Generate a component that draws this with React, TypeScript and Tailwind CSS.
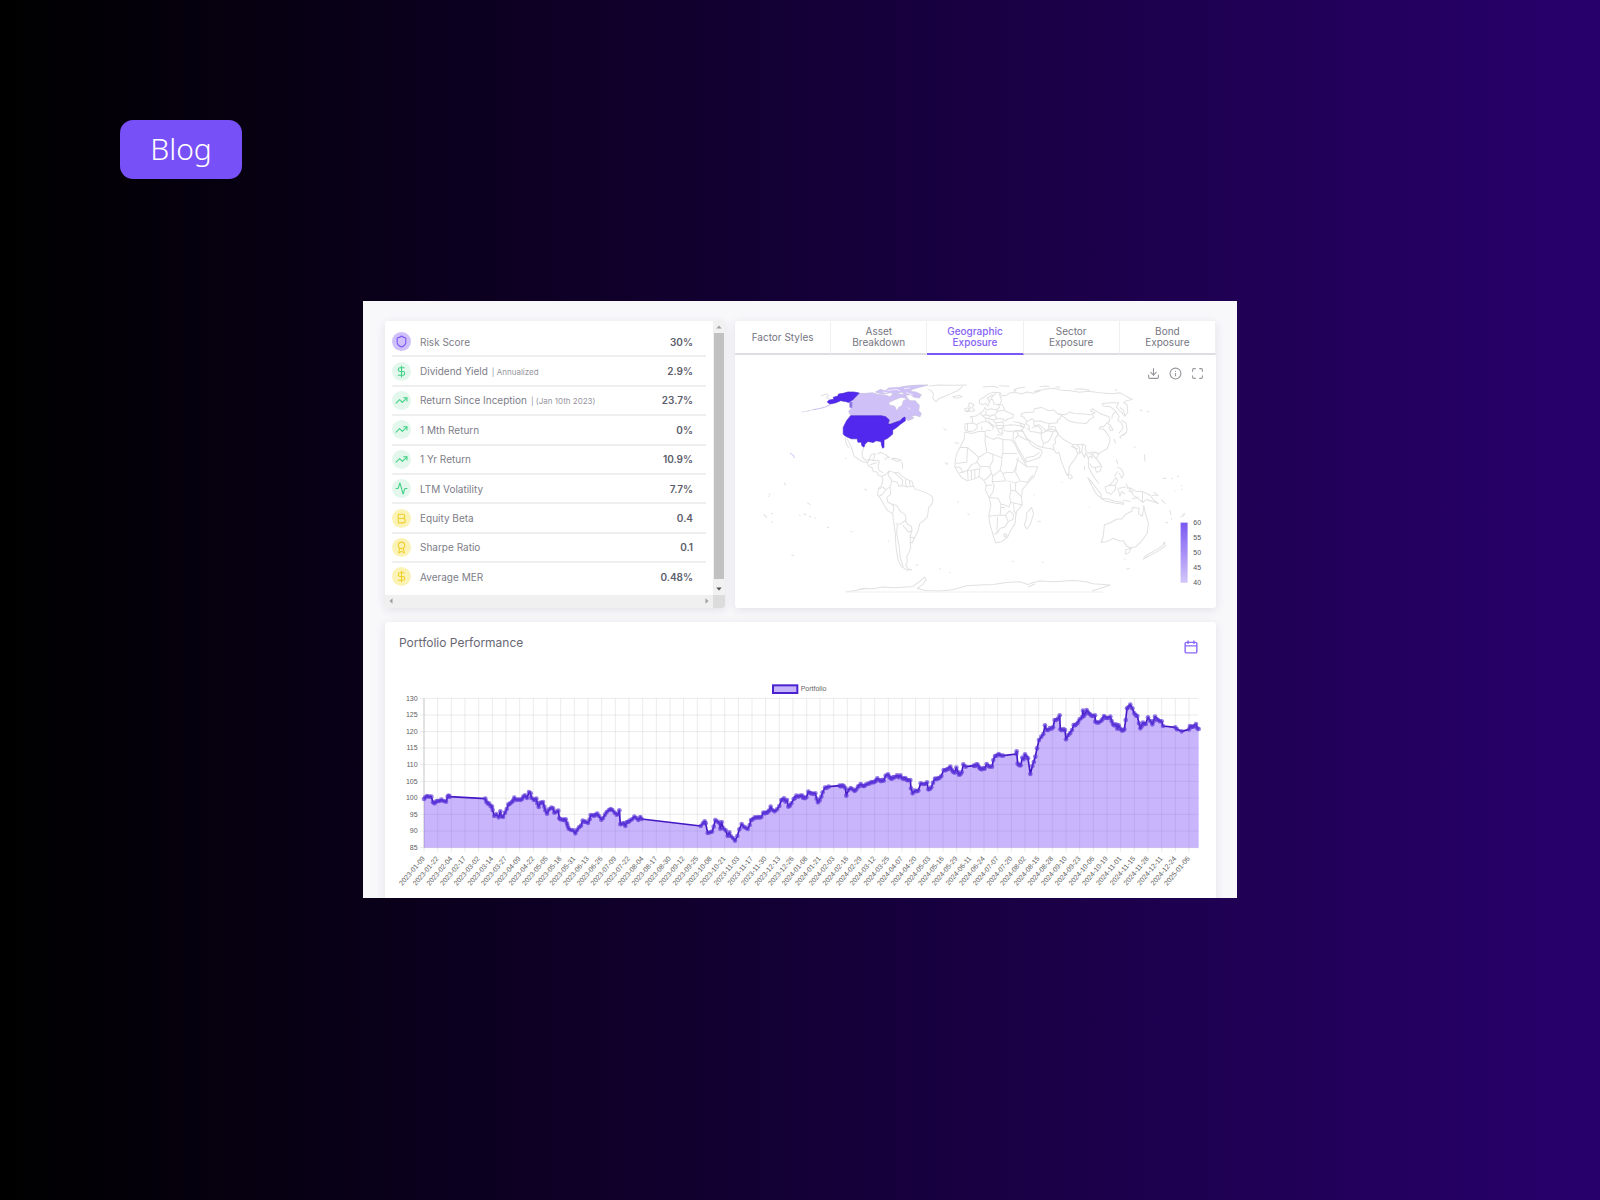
import React from "react";
import {
  Activity,
  Award,
  Bold,
  DollarSign,
  Download,
  Info,
  Maximize,
  Shield,
  TrendingUp,
  type LucideIcon,
} from "lucide-react";

type Metric = {
  label: string;
  note?: string;
  value: string;
  icon: LucideIcon;
  tone: string;
};

const VIOLET = "bg-[#cfc0fa] text-[#7b55f6]";
const GREEN = "bg-[#e4f7ec] text-[#3fd084]";
const YELLOW = "bg-[#fbf3b6] text-[#f0cf2c]";

const METRICS: Metric[] = [
  { label: "Risk Score", value: "30%", icon: Shield, tone: VIOLET },
  { label: "Dividend Yield", note: "| Annualized", value: "2.9%", icon: DollarSign, tone: GREEN },
  { label: "Return Since Inception", note: "| (Jan 10th 2023)", value: "23.7%", icon: TrendingUp, tone: GREEN },
  { label: "1 Mth Return", value: "0%", icon: TrendingUp, tone: GREEN },
  { label: "1 Yr Return", value: "10.9%", icon: TrendingUp, tone: GREEN },
  { label: "LTM Volatility", value: "7.7%", icon: Activity, tone: GREEN },
  { label: "Equity Beta", value: "0.4", icon: Bold, tone: YELLOW },
  { label: "Sharpe Ratio", value: "0.1", icon: Award, tone: YELLOW },
  { label: "Average MER", value: "0.48%", icon: DollarSign, tone: YELLOW },
];

const TABS = ["Factor Styles", "Asset Breakdown", "Geographic Exposure", "Sector Exposure", "Bond Exposure"];

const CARD = "bg-white rounded-[3px] shadow-[0_2px_10px_rgba(40,40,60,0.10)]";

function Arrow({ d, dark = false }: { d: string; dark?: boolean }) {
  return (
    <svg viewBox="0 0 12 12" className={dark ? "size-3 fill-[#505050]" : "size-3 fill-[#a0a0a0]"} aria-hidden="true">
      <path d={d} />
    </svg>
  );
}

function MetricsCard() {
  return (
    <section className={`${CARD} grid grid-cols-[1fr_12px] grid-rows-[1fr_13px] overflow-hidden`}>
      <dl className="flex flex-col pt-[7px] pb-[3px] pl-[7px] pr-[7px]">
        {METRICS.map(({ label, note, value, icon: Icon, tone }, i) => (
          <div
            key={label}
            className={`flex flex-1 items-center border-b-2 pr-[13px] ${
              i < METRICS.length - 1 ? "border-[#efefef]" : "border-transparent"
            }`}
          >
            <span className={`flex size-[19px] items-center justify-center rounded-full ${tone}`}>
              <Icon size={13} strokeWidth={2} />
            </span>
            <dt className="ml-[9px] flex items-baseline gap-1 text-[10px] leading-none text-[#7d7d88]">
              {label}
              {note && <span className="text-[8px] text-[#96969f]">{note}</span>}
            </dt>
            <dd className="ml-auto text-[10px] leading-none font-semibold text-[#5d5d6b]">{value}</dd>
          </div>
        ))}
      </dl>
      <div className="flex flex-col bg-[#f1f1f1]" aria-hidden="true">
        <Arrow d="M6 4.5 8.7 7.5H3.3z" />
        <div className="mx-px flex-1 bg-[#c1c1c1]" />
        <div className="pt-[4px]">
          <Arrow dark d="M6 7.5 8.7 4.5H3.3z" />
        </div>
      </div>
      <div className="flex justify-between bg-[#f0f0f0]" aria-hidden="true">
        <Arrow d="M4.5 6 7.5 3.3V8.7z" />
        <Arrow d="M7.5 6 4.5 3.3V8.7z" />
      </div>
      <div className="bg-[#dcdcdc]" />
    </section>
  );
}

const AMERICAS = [
  "M318,202 L319,214 L324,226 L329,233 M323,205 L329,216 L336,232 L341,244 L344,258 L356,266 L368,274 L378,276 L384,278 L388,288 L398,292 L402,304 L412,305 L418,316 L428,318 L440,312 L450,302 L462,306 L478,308 L488,318 L500,326 L518,334 L522,346 L526,356 L545,362 L560,368 L576,377 L581,386 L578,400 L568,412 L564,440 L552,452 L541,460 L536,482 L526,500 L518,518 L512,515 L514,532 L508,548 L502,558 L504,575 L499,585 L506,596 L518,598 L502,599 L486,588 L476,570 L470,530 L468,490 L462,450 L460,430 L446,422 L434,404 L424,385 L415,374 L417,356 L427,345 L431,330 L428,318",
  "M374,232 L368,246 L370,262 L382,272 L390,266 L397,252 L408,251 L404,264 L400,270 L420,272 L416,290 L420,302 L432,308 M384,278 L392,268 L402,272 M392,284 L412,278",
  "M414,251 L424,247 L436,252 L450,262 L440,262 M456,266 L466,264 L486,270 L474,274z M434,266 l8,2 M488,274 L490,296",
  "M450,302 L446,314 L458,332 L474,336 L478,348 L490,346 L502,350 L524,348 M466,308 L482,322 L490,330 L488,346 M500,326 L498,340 L502,350 M510,330 L512,346 M417,358 L430,350 L440,358 L430,372 L420,378 M440,358 L452,350 L458,332 M452,350 L454,372 L442,382 L446,396 L458,402 L464,412 L460,430 M458,402 L472,406 L484,424 L498,434 L500,450 L490,456 L482,462 L468,460 M498,450 L504,462 L516,468 L518,480 L508,486 L490,464 M518,480 L512,498 L514,516 M512,500 L528,504 M474,462 L472,490 L480,530 L482,560 L492,590",
  "M568,48 L600,45 L640,46 L682,45 M566,58 L576,62 L582,72 L580,86 L590,95 L598,86 L612,80 L636,70 L654,62 L664,54 L670,47",
  "M527,585 l10,-2 M600,595 l5,1 M630,606 l4,1 M375,356 l8,4 M204,397 l10,7 M193,430 l8,4 M210,437 l6,3 M226,442 l5,2 M180,434 l4,3 M74,432 l10,10 M90,370 l4,3 M86,378 l5,0 M135,338 l6,8 M96,454 l5,2 M157,553 l7,3 M96,430 l5,0 M264,470 l6,3 M334,484 l6,0 M445,512 l4,1 M318,264 l4,2 M612,175 l10,6 M616,278 l10,2 M622,284 l3,-4 M645,218 l14,1 M684,430 l6,4 M654,394 l4,2",
  "M245,78 l16,-6 8,5 -8,6 10,4 M205,124 l4,-1",
];

const OLD_WORLD = [
  // Europe
  "M40,80 l20,-4 8,4 -18,5z M130,51 L162,49 L176,53 M178,47 L210,49 M128,104 L119,98 L121,88 L136,80 L148,71 L162,67 L182,68 L180,74 L186,92 L180,104 L164,102 L160,90 L154,86 L150,96 L144,108 L138,100 L128,104 M154,86 L162,76 L170,70 M150,96 L144,84 L160,74",
  "M90,98 L104,104 L98,112 L106,122 L80,125 L94,114 L86,106z M76,116 l10,-3 3,9 -12,1z M77,161 L96,159 L112,163 L114,172 L104,182 L90,184 L78,181 L76,172z M84,162 L84,182 M98,159 L100,146 L92,140 L110,138 L122,130 L132,122 L136,112 L142,120 L154,116 L170,120 L180,112 L176,102 M122,130 L130,138 L140,134 L138,122 M112,163 L126,156 L140,154 L138,144 L130,138",
  "M140,134 L152,138 L166,134 L174,124 L170,116 M152,138 L148,146 L138,144 M166,134 L172,146 L160,150 L148,146 M174,124 L192,120 L204,126 L222,134 L220,142 L206,146 L198,152 L188,146 L172,146 M172,104 L188,104 L196,118 M140,154 L150,160 L162,172 L158,178 M146,152 L156,162 L168,170 M160,150 L168,158 L172,172 L180,188 L190,190 L186,176 L192,168 L190,152 M168,158 L190,156 M170,166 L190,166 M176,176 L190,174 M126,170 l2,10 M140,180 l14,2 M172,194 l18,1",
  "M192,168 L212,164 L238,166 L252,172 L248,180 L228,182 L212,184 L194,182z M222,154 L240,158 L256,164 L252,172 M240,158 L246,168 L258,172",
  // Russia and the Arctic coast
  "M182,68 L186,78 L200,76 L212,68 L232,68 L246,72 L262,66 L282,70 L302,62 L284,64 L320,57 L344,55 L362,60 L392,62 L420,67 L446,64 L480,68 L518,71 L540,68 L556,76 L568,84 L578,88 L560,92 L552,98 L562,104 L564,126 L556,138 L540,122 L530,112 L536,98 L512,98 L488,100 L490,108 L512,110 L528,124 L518,134 L516,146 M222,60 l14,-6 20,-3 M230,60 l-8,6 M300,50 l18,-2 12,3 M404,58 l20,-2 26,5 M524,60 l8,0 M348,50 l14,2",
  // Central Asia
  "M245,132 L254,128 L282,126 L284,116 L306,112 L326,122 L342,120 L356,132 L366,136 L360,146 L352,152 L354,158 L330,160 L316,158 L300,152 L290,154 L282,150 L278,146 L262,154 L254,142 L244,138z M262,154 L258,160 L268,168 L270,180 L262,176 M282,150 L284,166 L300,164 L314,178 L322,182 L334,176 L350,182 L346,170 L326,170 L330,160 M278,172 L296,168 L306,180 L304,190",
  "M270,184 L288,186 L304,190 L306,206 L312,220 L308,232 L290,226 L278,216 L262,206 L250,184 L244,178 M304,190 L322,182 L340,184 L336,198 L326,214 L314,220 M340,184 L350,182 L356,192 L346,206 L348,218 L340,226 L344,240 L334,236 L308,232 M322,182 L330,172",
  // China and Mongolia
  "M356,132 L376,134 L390,126 L404,130 L434,132 L452,134 L466,128 L452,122 L458,116 L484,132 L508,140 L510,152 L502,158 L490,172 L484,168 L478,176 L492,178 L502,190 L510,204 L510,216 L502,236 L484,246 L476,252 L468,246 L452,246 L446,250 L436,240 L438,228 L430,222 L412,224 L396,222 L372,208 L358,196 L350,182 M366,136 L386,152 L410,158 L440,160 L450,148 L462,142 L458,134 M502,158 L512,166 L520,180 L512,182 L508,168 M522,206 L528,220",
  "M528,124 L538,140 L534,150 L546,160 L550,176 L536,190 M544,150 L558,158 L562,180 L556,192 L548,196 M562,186 L540,200 l4,6 M556,138 L550,120 L540,112",
  // South and south-east Asia
  "M344,240 L350,250 L358,246 L364,270 L374,296 L382,316 L388,308 L388,290 L404,268 L414,252 L410,240 L402,228 M386,312 l8,2 4,8 -6,4 -6,-5z M412,224 L420,234 L418,250 L426,244 L430,222 M400,222 L396,230 L414,236 M426,244 L434,262 L438,248 M438,248 L446,264 L446,290 L454,306 L466,326 L478,340 M446,264 L458,252 L468,264 L476,274 L486,290 L480,304 L470,306 L466,292 L456,290 L450,280 M458,252 L466,246 L476,252 L470,266 L484,284 M466,292 L482,288 M452,250 L460,264",
  "M434,286 l1,14 M444,322 L458,338 L470,354 L484,372 L484,384 L470,372 L458,350z M484,384 L504,386 L526,394 L550,396 L552,402 L524,398 L496,392z M496,350 L508,346 L520,334 L528,322 L534,330 L526,344 L528,356 L514,372 L500,366z M508,346 L526,344 M534,352 L540,378 L546,364 L556,372 M538,354 L558,350 M560,340 l4,16 M530,268 L534,282 M532,290 L544,296 L552,312 L546,324 L538,308 M524,318 l10,-14 M550,390 l22,4 M576,386 l20,-6 M566,362 l14,2",
  "M566,352 L580,358 L590,364 L608,364 L632,376 L640,388 L656,400 L634,392 L620,388 L608,396 L596,386 L582,376z M608,364 V396 M636,376 L652,374 M642,366 L656,378 M664,388 L678,402 M690,420 l3,14 M722,440 l12,-6 M676,456 l8,2 M694,444 l2,4 M728,432 l8,-2 M712,318 l6,2 M724,356 l3,3 M702,362 l4,1 M600,120 l8,2 M620,124 l8,1 M614,252 l1,22 M668,324 l12,0 M582,230 l5,1 M694,324 l5,1 M724,346 l3,1",
  // Middle East
  "M222,186 L232,182 L250,184 L262,206 L274,222 L286,232 L304,238 L308,246 L300,262 L284,268 L258,276 L250,258 L238,240 L226,214 L220,206z M232,182 L236,196 L226,206 M236,196 L262,210 M258,276 L260,262 L284,258 L300,246",
  // Africa
  "M76,186 L96,190 L118,184 L138,184 L136,196 L152,204 L164,208 L172,202 L190,208 L216,210 L226,222 L238,248 L254,276 L262,290 L294,290 L284,318 L262,342 L248,358 L246,380 L248,404 L230,424 L226,460 L214,480 L204,500 L186,514 L168,517 L160,492 L150,456 L148,436 L154,404 L148,380 L138,360 L140,346 L134,332 L120,320 L104,326 L84,332 L66,322 L54,304 L46,290 L48,268 L52,250 L62,232 L74,206z",
  "M60,232 L84,232 L82,276 L48,280 M84,232 L118,262 L112,276 L96,284 L84,300 M118,262 L142,246 L136,210 L138,196 M142,246 L160,252 L160,272 L150,290 L122,288 L112,276 M160,252 L188,264 M190,208 V250 H232 M188,250 L186,282 L182,300 L190,310 L202,306 L220,308 L230,288 L236,262 M150,290 L156,308 L160,318 L182,300 M122,288 L118,320 M156,308 L146,322 L134,330",
  "M160,318 L158,334 L176,334 L198,332 L190,310 M230,288 L228,306 L242,332 L262,336 L280,314 M202,332 L228,338 L242,332 M158,334 L164,346 L160,366 L150,380 M140,346 L158,344 M228,338 L228,362 L246,380 M212,340 L214,360 L228,362 M214,360 L210,380 L214,396 L248,404 M150,382 L176,384 L184,402 L196,404 L208,410 L214,396 M184,402 L182,434 L148,438 M196,412 L184,412 M182,436 L198,434 L210,422 L222,432 L220,448 L206,454 L198,434 M206,454 L196,470 L182,474 L174,488 L164,492 M174,440 L172,486 M196,490 l6,4 -4,6 -6,-4z M222,400 L224,424 L232,432",
  "M48,290 L62,292 L70,306 L84,300 L86,330 M96,300 V328 M106,298 V326 M84,300 L96,300 L120,296 M60,308 L70,306 M230,266 L262,290",
  "M276,412 L282,430 L272,462 L262,476 L254,464 L262,438 L260,430z M294,452 l10,2 M218,572 l4,2 M306,574 l6,2 M448,410 l3,2 M366,336 l2,2 M282,372 l3,3",
  // Oceania
  "M546,446 L556,434 L568,426 L576,424 L578,412 L598,414 L596,430 L608,438 L612,406 L616,428 L626,460 L622,488 L606,512 L586,530 L568,532 L556,522 L552,512 L540,512 L520,504 L500,514 L484,516 L490,500 L494,464 L514,456 L532,446z M562,530 l-12,-20 M558,538 l16,-4 -6,12 -10,6 -2,-6z M674,514 L676,528 L648,546 L610,566 L618,556 L650,538 L668,526z M560,596 l10,-2 M552,566 l5,0",
];

const ANTARCTICA =
  "M320,664 L350,660 L370,654 L402,655 L430,650 L470,652 L520,648 L540,634 L556,620 L560,628 L550,642 L534,654 L560,660 L600,662 L640,658 L680,646 L720,644 L762,642 L800,636 L840,634 L866,642 L880,636 L900,632 L940,634 L1000,630 L1040,634 L1060,640 L1112,644 L1080,654 L1056,662 M340,662 l40,-8 M866,650 l20,-10";

const SCALE_TICKS = [60, 55, 50, 45, 40];

function WorldMap() {
  return (
    <svg viewBox="-12 30 1440 684" className="block h-auto w-full" role="img" aria-label="Geographic exposure by country">
      <defs>
        <linearGradient id="exposure" x1="0" y1="0" x2="0" y2="1">
          <stop offset="0" stopColor="#7a58f2" />
          <stop offset="1" stopColor="#d3c6fa" />
        </linearGradient>
      </defs>
      <g fill="none" stroke="#e1e1e2" strokeWidth="3" strokeLinejoin="round">
        {AMERICAS.map((d) => (
          <path key={d} d={d} />
        ))}
        <g transform="translate(600 0)">
          {OLD_WORLD.map((d) => (
            <path key={d} d={d} />
          ))}
        </g>
        <path d={ANTARCTICA} />
        <path d="M320,665 H1090" stroke="#efeff0" />
      </g>
      <g stroke="#c9c3dc" strokeWidth="2" strokeLinejoin="round">
        <path
          fill="#cfc1f8"
          d="M358,70 L378,70 L400,68 L412,72 L440,76 L452,80 L462,70 L480,72 L498,74 L506,86 L486,82 L464,90 L448,98 L452,106 L466,108 L472,122 L478,112 L488,106 L492,92 L504,86 L514,92 L528,92 L540,106 L538,122 L546,130 L542,140 L528,136 L516,138 L524,144 L506,152 L498,144 L482,150 L470,156 L446,164 L450,150 L440,139 L334,136 L328,124 L338,112 L336,94z"
        />
        <path
          fill="#cfc1f8"
          d="M408,66 L424,58 L438,62 L448,54 L480,52 L500,48 L540,45 L566,45 L540,52 L520,58 L512,64 L530,66 L546,74 L540,84 L524,82 L514,74 L496,76 L488,66 L470,72 L452,68 L434,72 L420,70z"
        />
        <path
          fill="none"
          stroke="#ffffff"
          d="M444,62 L470,58 L482,62 M494,56 L512,54 M500,68 L520,74 M430,66 L444,68 M505,112 l8,6"
        />
        <path
          fill="#5228ef"
          stroke="#4a2ad0"
          d="M360,69 L344,66 L326,66 L312,70 L298,72 L296,78 L282,82 L284,88 L270,90 L264,96 L272,102 L290,98 L304,92 L318,94 L328,97 L340,90z"
        />
        <path fill="#8d75e6" stroke="none" d="M330,96h9v17h-8z" />
        <path
          fill="#5228ef"
          stroke="#4a2ad0"
          d="M334,137 L426,137 L440,140 L450,150 L446,162 L454,162 L470,156 L482,152 L490,144 L497,141 L498,152 L484,162 L472,172 L460,180 L460,192 L446,204 L434,210 L434,232 L430,234 L427,226 L425,214 L410,212 L402,217 L386,214 L377,222 L374,231 L368,227 L366,216 L356,216 L354,206 L336,206 L318,198 L312,192 L312,172 L322,152z"
        />
        <path fill="none" stroke="#a99aea" d="M272,104 L256,112 L238,116 L222,119" />
        <path fill="none" stroke="#cfcfe0" d="M222,119 L204,123 L188,126" />
        <path fill="none" stroke="#8d75e6" d="M153,249 l4,3 M160,254 l4,2 M163,259 l3,4" />
      </g>
      <rect x="1322" y="457" width="21" height="180" fill="url(#exposure)" />
      {SCALE_TICKS.map((tick, i) => (
        <text
          key={tick}
          x="1360"
          y={464 + i * 45}
          className="fill-[#55555c] font-['Liberation_Sans',sans-serif] text-[21px]"
        >
          {tick}
        </text>
      ))}
    </svg>
  );
}

function ExposureCard() {
  return (
    <section className={`${CARD} overflow-hidden`}>
      <div role="tablist" className="grid grid-cols-5">
        {TABS.map((tab) => {
          const active = tab === "Geographic Exposure";
          return (
            <button
              key={tab}
              role="tab"
              aria-selected={active}
              className={`flex h-[34px] items-center justify-center border-b-2 border-r px-4 text-[10px] leading-[11px] ${
                active
                  ? "border-b-[#7b57f5] border-r-[#f0f0f2] font-medium text-[#8562f6]"
                  : "border-b-[#dedee2] border-r-[#f0f0f2] text-[#75757f]"
              } ${tab === "Factor Styles" ? "whitespace-nowrap" : ""}`}
            >
              {tab}
            </button>
          );
        })}
      </div>
      <div className="flex h-[25px] items-start justify-end gap-[9px] pt-[12px] pr-[12px] text-[#95959c]">
        <button aria-label="Download">
          <Download size={13} strokeWidth={2} />
        </button>
        <button aria-label="Information">
          <Info size={13} strokeWidth={2} />
        </button>
        <button aria-label="Full screen">
          <Maximize size={13} strokeWidth={2} />
        </button>
      </div>
      <WorldMap />
    </section>
  );
}

const RUNS: string[] = [
  "163,567 167,562 172,558 178,560 185,560 190,577 195,580 200,574 204,573 210,573 215,569 222,573 229,575 234,560 237,557 240,560",
  "347,566 350,575 367,590 369,600 374,618 380,612 387,622 392,604 395,618 400,621 406,608 411,597 416,584 420,581 426,577 434,563 440,570 446,568 452,570 457,567 461,560 466,556 472,564 478,546 483,550 485,563 492,569 500,566 503,580 507,591 512,578 520,576 524,590 527,601 532,611 538,598 545,593 550,595 554,608 560,605 566,602 569,625 573,628 580,629 588,628 592,640 594,648 597,656 604,660 611,661 617,670 622,660 628,652 634,647 639,632 648,635 655,639 660,628 663,615 670,616 678,614 683,611 688,618 695,629 700,624 706,614 711,606 718,600 723,597 728,600 735,608 741,614 746,612 749,601 752,643 758,641 763,639 767,648 772,636 780,632 787,628 794,620 800,624 806,630 812,621 816,627",
  "993,648 1000,640 1005,634 1008,640 1014,669 1020,667 1027,665 1032,650 1037,630 1044,635 1050,640 1052,656 1056,636 1061,655 1068,661 1074,678 1079,667 1083,678 1090,684 1096,692 1103,678 1109,658 1116,642 1122,650 1128,653 1134,657 1140,645 1144,630 1155,622 1165,621 1175,621 1181,608 1190,608 1198,602 1203,590 1208,600 1215,604 1222,598 1229,588 1235,570 1243,565 1248,575 1252,570 1256,590 1265,580 1272,567 1280,557 1286,560 1292,557 1298,557 1300,563 1310,562 1316,545 1326,550 1337,550 1341,566 1345,577 1355,560 1359,547 1366,533 1377,530",
  "1410,527 1422,528 1427,534 1430,557 1436,540 1443,534 1449,538 1455,543 1465,530 1473,522 1480,528 1488,524 1495,521 1505,516 1515,515 1523,505 1530,511 1542,512 1548,497 1555,493 1563,505 1575,502 1582,496 1587,502 1592,496 1598,505 1607,504 1615,511 1622,510 1624,535 1629,550 1635,542 1646,542 1653,520 1660,522 1667,522 1672,517 1676,538 1685,532 1690,518 1696,506 1705,505 1715,498 1722,480 1732,478 1742,470 1750,485 1755,488 1760,473 1768,494 1776,487 1781,463 1788,470",
  "1812,467 1824,464 1832,476 1845,476 1851,462 1860,470 1867,470 1871,450 1876,438 1887,432 1893,436 1900,437",
  "1940,432 1941,424 1944,461 1953,466 1958,443 1962,448 1966,433 1975,445 1982,492 1988,468 1997,440 2002,415 2008,390 2015,380 2021,372 2026,346 2031,360 2050,352 2055,330 2065,326 2070,316 2072,358 2086,360 2089,388 2096,375 2107,360 2112,345 2120,343 2130,328 2137,322 2140,302 2143,318 2151,300 2160,312 2170,318 2176,316 2177,335 2188,337 2195,332 2203,318 2212,324 2222,320 2230,343 2242,346 2243,356 2247,346 2256,361 2264,358 2268,330 2272,295 2282,284 2288,295 2294,310 2303,318 2308,340 2312,355 2320,338 2328,342 2335,322 2342,333 2348,343 2356,320 2365,330 2376,334 2380,348",
  "2417,352 2422,358",
  "2436,364",
  "2458,358 2461,348 2470,350 2479,342 2483,355 2487,357",
];

type Point = [number, number];

const RUN_POINTS: Point[][] = RUNS.map((run) => run.split(" ").map((p) => p.split(",").map(Number) as Point));

function dailyMarkers(points: Point[]): Point[] {
  const out: Point[] = [];
  points.forEach(([x, y], i) => {
    out.push([x, y]);
    const next = points[i + 1];
    if (!next) return;
    const steps = Math.floor((next[0] - x) / 4);
    for (let s = 1; s < steps; s++) {
      out.push([x + ((next[0] - x) * s) / steps, y + ((next[1] - y) * s) / steps + (s % 2 ? 2 : -2)]);
    }
  });
  return out;
}

const LINE = RUN_POINTS.flat().map((p) => p.join(",")).join(" L");
const MARKERS = RUN_POINTS.flatMap(dailyMarkers);

const DATES =
  "2023-01-09 2023-01-22 2023-02-04 2023-02-17 2023-03-02 2023-03-14 2023-03-27 2023-04-09 2023-04-22 2023-05-05 2023-05-18 2023-05-31 2023-06-13 2023-06-26 2023-07-09 2023-07-22 2023-08-04 2023-08-17 2023-08-30 2023-09-12 2023-09-25 2023-10-08 2023-10-21 2023-11-03 2023-11-17 2023-11-30 2023-12-13 2023-12-26 2024-01-08 2024-01-21 2024-02-03 2024-02-16 2024-02-29 2024-03-12 2024-03-25 2024-04-07 2024-04-20 2024-05-03 2024-05-16 2024-05-29 2024-06-11 2024-06-24 2024-07-07 2024-07-20 2024-08-02 2024-08-15 2024-08-28 2024-09-10 2024-09-23 2024-10-06 2024-10-19 2024-11-01 2024-11-15 2024-11-28 2024-12-11 2024-12-24 2025-01-06".split(
    " "
  );

const LEVELS = [130, 125, 120, 115, 110, 105, 100, 95, 90, 85];
const LEFT = 163;
const RIGHT = 2487;
const TOP = 265;
const BOTTOM = 713;

const dateX = (i: number) => Math.round(LEFT + (i * 2295) / 56);
const levelY = (v: number) => Math.round(BOTTOM - ((v - 85) * (BOTTOM - TOP)) / 45);

function PerformanceChart() {
  return (
    <svg
      viewBox="46 210 2493 690"
      className="block h-auto w-full font-['Liberation_Sans',Arial,sans-serif] text-[21px]"
      role="img"
      aria-label="Portfolio performance over time"
    >
      <rect x="1210" y="226" width="73" height="23" fill="#c6b4fb" stroke="#4b22cf" strokeWidth="6" />
      <text x="1293" y="243" className="fill-[#666]">
        Portfolio
      </text>
      <g stroke="#000" strokeOpacity="0.08" strokeWidth="3">
        {LEVELS.map((v) => (
          <path key={v} d={`M${LEFT - 12},${levelY(v)} H${RIGHT}`} />
        ))}
        {DATES.map((d, i) => (
          <path key={d} d={`M${dateX(i)},${TOP} V${BOTTOM + 14}`} />
        ))}
      </g>
      <path d={`M${LEFT},${TOP} V${BOTTOM}`} stroke="#cfcfcf" strokeWidth="3" />
      <path d={`M${LEFT},${BOTTOM} L${LINE} L${RIGHT},${BOTTOM}z`} fill="#7846f5" fillOpacity="0.4" />
      <path d={`M${LINE}`} fill="none" stroke="#4318c4" strokeWidth="5" strokeLinejoin="round" />
      <g fill="#5a34d8" fillOpacity="0.65">
        {MARKERS.map(([x, y], i) => (
          <circle key={i} cx={x} cy={y} r="7" />
        ))}
      </g>
      <g className="fill-[#606060]" textAnchor="end">
        {LEVELS.map((v) => (
          <text key={v} x="144" y={levelY(v) + 7}>
            {v}
          </text>
        ))}
        {DATES.map((d, i) => (
          <text key={d} transform={`translate(${dateX(i) + 4} 746) rotate(-50)`}>
            {d}
          </text>
        ))}
      </g>
    </svg>
  );
}

function PerformanceCard() {
  return (
    <section className={`${CARD} pb-6`}>
      <div className="flex h-[58px] items-start justify-between pt-[14px] pr-[18px] pl-[14px]">
        <h2 className="text-[12px] leading-[14px] text-[#686874]">Portfolio Performance</h2>
        <button aria-label="Choose dates" className="mt-[4px] text-[#8a68f8]">
          <svg viewBox="0 0 24 24" className="size-[14px]" fill="none" stroke="currentColor" strokeWidth="2.4">
            <rect x="2" y="4" width="20" height="18" rx="2" />
            <path d="M2 10h20M7 1v6M17 1v6" />
          </svg>
        </button>
      </div>
      <PerformanceChart />
    </section>
  );
}

export default function App() {
  return (
    <div className="min-h-screen w-full bg-[linear-gradient(to_right,#000000,#28006c)] pb-20 font-['Inter',sans-serif]">
      <header className="px-[120px] pt-[120px]">
        <a
          href="#blog"
          className="inline-flex h-[59px] w-[122px] items-center justify-center rounded-[13px] bg-[#7850f7] pb-[2px] align-top font-['Noto_Sans',sans-serif] text-[30px] leading-none font-light text-white"
        >
          Blog
        </a>
      </header>
      <main className="mx-auto mt-[122px] aspect-[874/597] max-w-[874px] overflow-hidden bg-[#f8f8fb] pt-[20px] pr-[21px] pl-[22px]">
        <div className="grid grid-cols-[340fr_481fr] gap-x-[10px] gap-y-[14px]">
          <MetricsCard />
          <ExposureCard />
          <div className="col-span-2">
            <PerformanceCard />
          </div>
        </div>
      </main>
    </div>
  );
}
